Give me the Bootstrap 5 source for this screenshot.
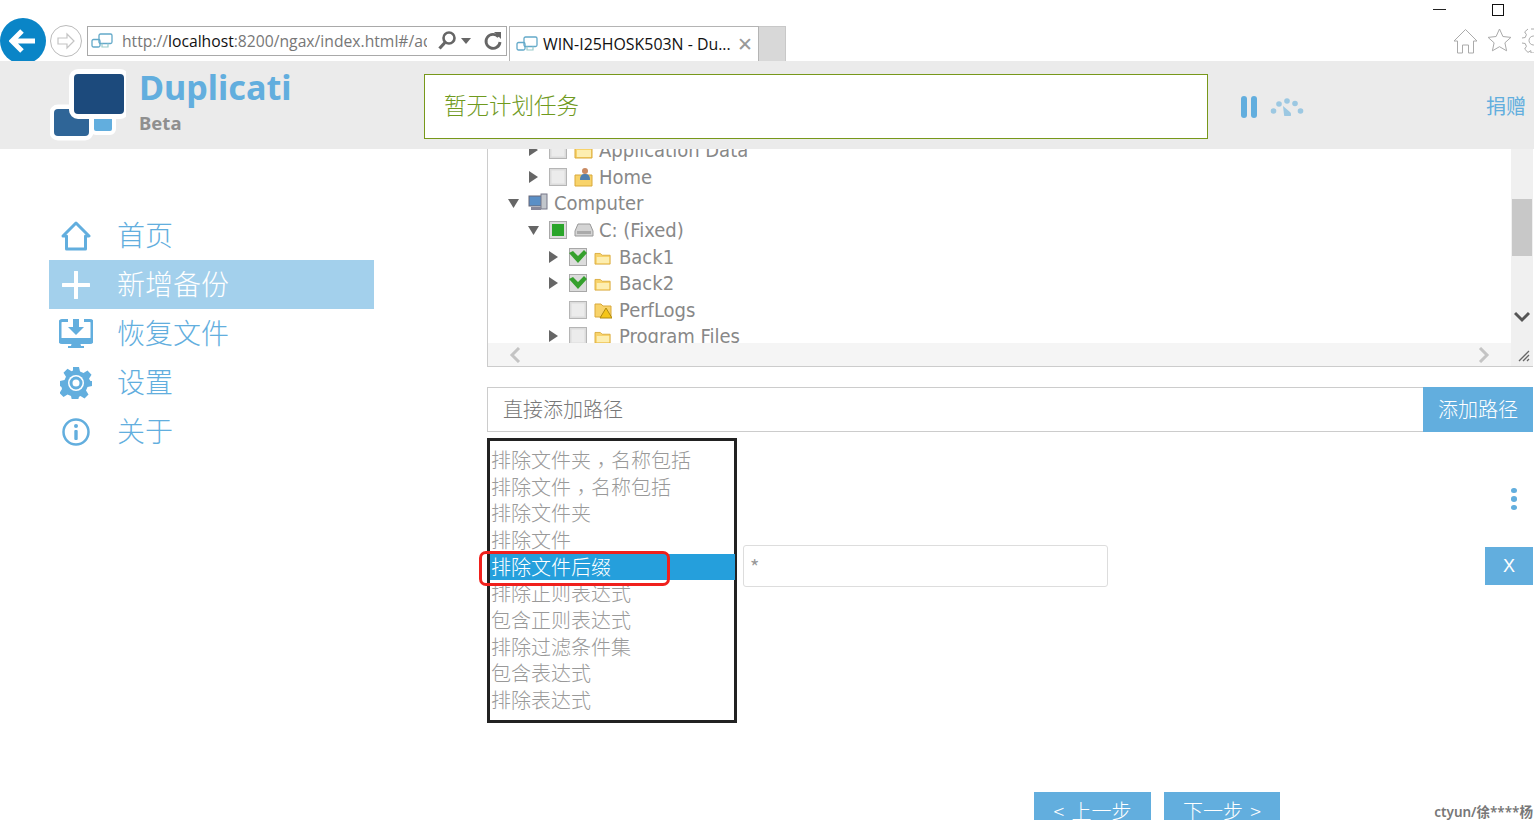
<!DOCTYPE html>
<html lang="zh">
<head>
<meta charset="utf-8">
<title>Duplicati</title>
<link href="https://cdn.jsdelivr.net/npm/bootstrap@5.3.0/dist/css/bootstrap.min.css" rel="stylesheet">
<style>
html,body{height:820px;overflow:hidden;background:#fff}
body{font-family:"Noto Sans CJK SC","Noto Sans",sans-serif;color:#999;width:1534px}
svg{display:block;flex:none}
.ie-bar{height:61px;overflow:hidden;background:#fff}
.win-ctl{height:18px;padding-right:30px;gap:46px}
.win-min{width:13px;height:1px;background:#222;margin-top:9px}
.win-max{width:12px;height:12px;border:1.5px solid #111;margin-top:4px}
.ie-nav{height:43px;align-items:flex-start}
.back-btn{width:46px;height:46px;border-radius:50%;background:#0a85c7;margin-left:0}
.fwd-btn{width:32px;height:32px;margin:7px 5px 0 4px;border:1px solid #bbb;border-radius:50%}
.addr{width:420px;height:30px;margin-top:8px;border:1px solid #a9a9a9;padding:0 0 0 3px}
.addr-url{font:15.7px "Open Sans",sans-serif;color:#777;width:305px;flex:none;overflow:hidden;white-space:nowrap;margin:0 2px 0 9px}
.addr-url b{font-weight:400;color:#111}
.tool-r{margin-left:12px}
.ie-tab{width:250px;height:35px;margin:8px 0 0 2px;border:1px solid #b4b4b4;border-bottom:0;padding:0 6px}
.ie-tab-text{font:15.9px "Open Sans",sans-serif;color:#111;margin-left:5px;white-space:nowrap;width:190px}
.ie-x{font:19px "Liberation Sans",sans-serif;color:#999;line-height:1;margin-left:6px}
.ie-new{width:27px;height:35px;margin-top:8px;background:#d8d8d8;border:1px solid #c8c8c8;border-bottom:0;border-left:0}
.ie-tools{gap:9px;margin:10px -12px 0 auto}
.app-head{height:88px;background:#ebebeb;padding-left:50px}
.brand-text{margin-left:13px;width:277px;padding-top:4px}
.brand-name{font:700 34.2px/44px "Noto Sans",sans-serif;color:#62aede}
.brand-sub{font:700 18.5px/26px "Noto Sans",sans-serif;color:#8f8f8f;margin-top:1px}
.status-box{width:784px;height:65px;margin:13px 0 0 8px;background:#fff;border:1px solid #77981a;padding:0 0 4px 19px;font-size:22.5px;font-weight:300;color:#6f9a1e}
.pause-wrap{margin:35px 0 0 33px;gap:13px}
.donate{margin:30px 8px 0 auto;font-size:20px;color:#62aede}
.page-main{display:flex}
.side-col{width:487px;padding:62px 0 0 49px;flex:none}
.side-link{width:325px;height:49px;color:#62aede;font-size:28px;font-weight:300;text-decoration:none}
.side-link.is-on{background:#a3d0ec;color:#fff}
.side-txt{margin-top:-4px}
.side-ico{width:53px;margin-right:15px;flex:none;display:flex;justify-content:center}
.body-col{flex:1;min-width:0;padding-right:1px}
.tree-panel{height:218px;border:1px solid #ccc;border-top:0;border-right:0;display:flex}
.tree-main{flex:1;display:flex;flex-direction:column;min-width:0}
.tree-view{height:195px;overflow:hidden;padding:0 0 0 20px}
.tree-list{margin-top:-12px}
.tree-row{height:26.6px;display:flex;align-items:center;font:20px "DejaVu Sans Condensed","DejaVu Sans",sans-serif;font-stretch:condensed;color:#888;white-space:nowrap}
.lv1{padding-left:20px}
.lv2{padding-left:40px}
.tw{width:11px;height:12px;margin-right:10px;flex:none}
.tw-top{margin-right:9px}
.tree-gap{width:21px;flex:none}
.chk{width:18px;height:18px;margin-right:7px;flex:none}
.fi{margin-right:5px}
.fi-top{margin-right:6px}
.fi-sub{margin-right:7px}
.h-track{height:23px;background:#f5f5f5;padding:0 21px 0 21px}
.v-track{width:22px;background:#f0f0f0;flex:none;padding-top:50px}
.v-thumb{height:57px;background:#c8c8c8;margin:0 1px}
.v-down{margin:55px auto 0}
.v-grip{margin:27px 0 0 7px}
.path-group{margin-top:20px;height:45px}
.path-input.form-control{height:45px;border:1px solid #ccc;border-radius:0;border-right:0;padding:0 15px 2px;font-size:20px;font-weight:300;box-shadow:none}
.path-input::placeholder{color:#777}
.path-btn{width:110px;flex:none;background:#62aede;color:#fff;border:0;border-radius:0;font-size:20px;font-weight:300;padding:0 0 2px}
.filter-row{margin-top:6px}
.type-list{width:250px;height:285px;border:3px solid #222;padding-top:6.2px;position:relative;flex:none;font-size:20px;font-weight:300;color:#999}
.type-opt{height:26.65px;line-height:26.65px;margin-right:-1px;padding-left:1px;white-space:nowrap}
.type-opt.is-sel{background:#259fdc;color:#fff}
.cm-tc{font-family:"Noto Sans CJK TC",sans-serif;vertical-align:-5px;line-height:1}
.red-mark{position:absolute;left:-11px;top:110px;width:191px;height:35px;border:3px solid #f0201c;border-radius:7px;pointer-events:none}
.filter-side{flex:1;padding-left:6px;min-width:0}
.dots-line{height:22px;margin-top:50px;padding-right:16px;justify-content:flex-end}
.dots{width:6px;display:flex;flex-direction:column;gap:3px}
.dots span{height:6px;border-radius:50%;background:#62aede}
.value-line{margin-top:35px}
.value-box{width:365px;height:42px;border:1px solid #ddd;border-radius:3px;padding:6px 6px 0;font-size:20px;color:#999}
.x-btn{margin-left:auto;width:48px;height:38px;background:#62aede;color:#fff;border:0;border-radius:0;font-size:18px;padding:0;font-family:"Liberation Sans",sans-serif}
.wiz-row{margin-top:69px;padding-left:547px;gap:13px}
.wiz-btn{height:45px;background:#62aede;color:#fff;border:0;border-radius:0;font-size:20px;font-weight:300;padding:0 0 8px;display:block;word-spacing:3px}
.wiz-a{width:117px}
.wiz-b{width:116px}
.credit{position:absolute;right:1px;bottom:-1px;font:600 13.5px "Noto Sans","Noto Sans CJK SC",sans-serif;color:#777}
</style>
</head>
<body class="position-relative">

<svg width="0" height="0" class="position-absolute">
  <defs>
    <symbol id="ico-screens" viewBox="0 0 22 16"><rect x="8" y="1" width="13" height="9.5" rx="1.5" fill="#fff" stroke="#63a9c9" stroke-width="1.3"/><rect x="1" y="6.5" width="8" height="7.5" rx="1.5" fill="none" stroke="#63a9c9" stroke-width="1.3"/><path d="M11 10.5v3.5h6v-3.5" fill="none" stroke="#9cc" stroke-width="1.2"/></symbol>
    <symbol id="ico-folder" viewBox="0 0 20 18"><path d="M1 5h6l2 2h9v10H1z" fill="#f8d36a" stroke="#d9a93a"/><path d="M3 9h14v7H3z" fill="#fdeeb0"/></symbol>
    <symbol id="ico-box" viewBox="0 0 18 18"><rect x=".5" y=".5" width="17" height="17" fill="#dcdcdc" stroke="#b5b5b5"/><rect x="2.5" y="2.5" width="13" height="13" fill="#ececec"/></symbol>
    <symbol id="ico-tick" viewBox="0 0 18 18"><rect x=".5" y=".5" width="17" height="17" fill="#dcdcdc" stroke="#a8a8a8"/><path d="M0 5l4-2 5 5 6-6 3 3-9 10z" fill="#35a02d"/></symbol>
    <symbol id="ico-right" viewBox="0 0 11 12"><path d="M1 0l9 6-9 6z" fill="#666"/></symbol>
    <symbol id="ico-down" viewBox="0 0 11 12"><path d="M0 2h11L5.500 11z" fill="#666"/></symbol>
  </defs>
</svg>

<header class="ie-bar">
  <div class="win-ctl d-flex justify-content-end">
    <div class="win-min"></div>
    <div class="win-max"></div>
  </div>
  <div class="ie-nav d-flex">
    <div class="back-btn d-flex align-items-center justify-content-center flex-none">
      <svg width="28" height="26" viewBox="0 0 28 26"><path d="M13 3L3 13l10 10M4 13h22" fill="none" stroke="#fff" stroke-width="5"/></svg>
    </div>
    <div class="fwd-btn d-flex align-items-center justify-content-center">
      <svg width="20" height="18" viewBox="0 0 20 18"><path d="M11 2l7 7-7 7v-4H2V6h9z" fill="none" stroke="#c4c4c4" stroke-width="1.2"/></svg>
    </div>
    <div class="addr d-flex align-items-center">
      <svg width="22" height="16"><use href="#ico-screens"/></svg>
      <div class="addr-url">http://<b>localhost</b>:8200/ngax/index.html#/add</div>
      <svg class="ms-2" width="20" height="22" viewBox="0 0 20 22"><circle cx="12" cy="8" r="5.500" fill="none" stroke="#666" stroke-width="2.600"/><path d="M8 12.500L2.500 18.500" stroke="#666" stroke-width="3.200"/></svg>
      <svg class="ms-1" width="10" height="6" viewBox="0 0 10 6"><path d="M0 0h10L5 6z" fill="#666"/></svg>
      <svg class="tool-r" width="20" height="22" viewBox="0 0 20 22"><path d="M15.500 7A7 7 0 1 0 17 12" fill="none" stroke="#666" stroke-width="2.800"/><path d="M11 2l7 0 0 7z" fill="#666"/></svg>
    </div>
    <div class="ie-tab d-flex align-items-center">
      <svg width="22" height="16"><use href="#ico-screens"/></svg>
      <div class="ie-tab-text">WIN-I25HOSK503N - Du...</div>
      <span class="ie-x">✕</span>
    </div>
    <div class="ie-new"></div>
    <div class="ie-tools d-flex">
      <svg width="25" height="26" viewBox="0 0 25 26"><path d="M1 13L12.500 1.500 24 13h-3.500v12h-5v-8h-6v8h-5V13z" fill="none" stroke="#aaa"/></svg>
      <svg width="25" height="25" viewBox="0 0 25 25"><path d="M12.500 1l3.400 7.500 8 .9-6 5.400 1.700 8-7.100-4.100-7.100 4.100 1.700-8-6-5.400 8-.9z" fill="none" stroke="#aaa"/></svg>
      <svg width="25" height="25" viewBox="0 0 25 25"><circle cx="12.500" cy="12.500" r="4.500" fill="none" stroke="#aaa"/><path d="M10 1h5l.7 3.200 2.800 1.200 2.800-1.700 3.200 3.300-1.800 2.800 1.200 2.700H27M1 10l3.200-.5 1.200-2.800-1.700-2.800L7 1M1 15l3.200.5 1.200 2.800-1.700 2.800L7 24.400l2.800-1.800 .2 2.400h5" fill="none" stroke="#aaa"/></svg>
    </div>
  </div>
</header>

<div class="app-head d-flex align-items-start">
  <svg class="mt-1" width="76" height="76" viewBox="0 0 76 76">
    <rect x="44" y="50" width="18" height="16" rx="2" fill="#62aede" stroke="#fff" stroke-width="8" paint-order="stroke"/>
    <rect x="4" y="44" width="35" height="27" rx="4" fill="#2f6597" stroke="#fff" stroke-width="9" paint-order="stroke"/>
    <rect x="24" y="9" width="50" height="40" rx="4" fill="#1c4a7c" stroke="#fff" stroke-width="10" paint-order="stroke"/>
  </svg>
  <div class="brand-text">
    <div class="brand-name">Duplicati</div>
    <div class="brand-sub">Beta</div>
  </div>
  <div class="status-box d-flex align-items-center">暂无计划任务</div>
  <div class="pause-wrap d-flex align-items-center">
    <svg width="16" height="22" viewBox="0 0 16 22"><rect width="6" height="22" rx="3" fill="#62aede"/><rect x="10" width="6" height="22" rx="3" fill="#62aede"/></svg>
    <svg width="34" height="18" viewBox="0 0 34 18" fill="#9cc8e2"><circle cx="3.500" cy="13" r="2.800"/><circle cx="9" cy="6" r="2.800"/><circle cx="17" cy="3" r="2.800"/><circle cx="25" cy="5.500" r="2.800"/><circle cx="30.500" cy="13" r="2.800"/><path d="M13 8l7 6a3.500 3.500 0 1 1-6 2.500z"/></svg>
  </div>
  <div class="donate">捐赠</div>
</div>

<main class="page-main">
  <nav class="side-col">
    <a class="side-link d-flex align-items-center" href="#">
      <span class="side-ico"><svg width="30" height="30" viewBox="0 0 30 30"><path d="M2 15L15 2l13 13h-3.500v13h-19V15z" fill="none" stroke="#62aede" stroke-width="3" stroke-linejoin="round"/></svg></span><span class="side-txt">首页</span>
    </a>
    <a class="side-link is-on d-flex align-items-center" href="#">
      <span class="side-ico"><svg width="28" height="28" viewBox="0 0 28 28"><path d="M14 1v26M1 14h26" stroke="#fff" stroke-width="4" stroke-linecap="round"/></svg></span><span class="side-txt">新增备份</span>
    </a>
    <a class="side-link d-flex align-items-center" href="#">
      <span class="side-ico"><svg width="34" height="30" viewBox="0 0 34 30"><path d="M9 1.500H3A2 2 0 0 0 1 3.500v18a2 2 0 0 0 2 2h28a2 2 0 0 0 2-2v-18a2 2 0 0 0-2-2h-6" fill="none" stroke="#62aede" stroke-width="3"/><path d="M1 19h32v4H1zM13 23h8l1 4h3v2H9v-2h3z" fill="#62aede"/><path d="M14 0h6v8h5l-8 8-8-8h5z" fill="#62aede"/></svg></span><span class="side-txt">恢复文件</span>
    </a>
    <a class="side-link d-flex align-items-center" href="#">
      <span class="side-ico"><svg width="32" height="32" viewBox="0 0 32 32"><path d="M13 0h6l1 4.500 3.500 1.500 4-2.500 4 4.200-2.500 4L30.500 14l1.500 0v5l-4.500 1-1.500 3.500 2.500 4-4 4-4-2.500-1.500.7-1 3.800h-6l-1-4.500-3.500-1.500-4 2.500-4-4 2.500-4L1.500 20 0 19v-5l4.500-1L6 9.700l-2.500-4 4-4 4 2.500 1.500-.7z" fill="#62aede"/><circle cx="16" cy="16" r="8" fill="#fff"/><circle cx="16" cy="16" r="5" fill="none" stroke="#62aede" stroke-width="3"/></svg></span><span class="side-txt">设置</span>
    </a>
    <a class="side-link d-flex align-items-center" href="#">
      <span class="side-ico"><svg width="28" height="28" viewBox="0 0 28 28"><circle cx="14" cy="14" r="12.500" fill="none" stroke="#62aede" stroke-width="2.500"/><circle cx="14" cy="8" r="2" fill="#62aede"/><rect x="12.300" y="12" width="3.400" height="10" rx="1" fill="#62aede"/></svg></span><span class="side-txt">关于</span>
    </a>
  </nav>

  <section class="body-col">
    <div class="tree-panel">
      <div class="tree-main">
        <div class="tree-view">
          <div class="tree-list">
            <div class="tree-row lv1"><svg class="tw"><use href="#ico-right"/></svg><svg class="chk"><use href="#ico-box"/></svg><svg class="fi" width="20" height="18"><use href="#ico-folder"/></svg>Application Data</div>
            <div class="tree-row lv1"><svg class="tw"><use href="#ico-right"/></svg><svg class="chk"><use href="#ico-box"/></svg><svg class="fi" width="20" height="20" viewBox="0 0 20 20"><path d="M1 8h17v11H1z" fill="#f8d36a" stroke="#d9a93a"/><circle cx="11" cy="4" r="3" fill="#c98a62"/><path d="M6 13c0-5 2-6 5-6s5 1 5 6z" fill="#4f7fae"/></svg>Home</div>
            <div class="tree-row"><svg class="tw tw-top"><use href="#ico-down"/></svg><svg class="fi-top" width="20" height="20" viewBox="0 0 20 20"><rect x="1" y="3" width="13" height="10" fill="#5a8fc6" stroke="#667"/><rect x="13" y="1" width="6" height="15" fill="#c2c6cc" stroke="#778"/><rect x="3" y="14" width="10" height="3" fill="#889"/></svg>Computer</div>
            <div class="tree-row lv1"><svg class="tw"><use href="#ico-down"/></svg><svg class="chk" viewBox="0 0 18 18"><rect x=".5" y=".5" width="17" height="17" fill="#dcdcdc" stroke="#a8a8a8"/><rect x="3" y="3" width="12" height="12" fill="#2aa52a"/></svg><svg class="fi" width="20" height="14" viewBox="0 0 20 14"><path d="M4 1h12l3 7v5H1V8z" fill="#d4d4d4" stroke="#999"/><rect x="3" y="8" width="14" height="3" fill="#aaa"/></svg>C: (Fixed)</div>
            <div class="tree-row lv2"><svg class="tw"><use href="#ico-right"/></svg><svg class="chk"><use href="#ico-tick"/></svg><svg class="fi-sub" width="18" height="16"><use href="#ico-folder"/></svg>Back1</div>
            <div class="tree-row lv2"><svg class="tw"><use href="#ico-right"/></svg><svg class="chk"><use href="#ico-tick"/></svg><svg class="fi-sub" width="18" height="16"><use href="#ico-folder"/></svg>Back2</div>
            <div class="tree-row lv2"><span class="tree-gap"></span><svg class="chk"><use href="#ico-box"/></svg><svg class="fi-sub" width="18" height="18" viewBox="0 0 18 18"><path d="M1 3h6l2 2h8v11H1z" fill="#f8d36a" stroke="#d9a93a"/><path d="M12 7l6 10H6z" fill="#f5c518" stroke="#b08a10"/></svg>PerfLogs</div>
            <div class="tree-row lv2"><svg class="tw"><use href="#ico-right"/></svg><svg class="chk"><use href="#ico-box"/></svg><svg class="fi-sub" width="18" height="16"><use href="#ico-folder"/></svg>Program Files</div>
          </div>
        </div>
        <div class="h-track d-flex align-items-center justify-content-between">
          <svg width="12" height="16" viewBox="0 0 12 16"><path d="M10 1L3 8l7 7" fill="none" stroke="#c4c4c4" stroke-width="3"/></svg>
          <svg width="12" height="16" viewBox="0 0 12 16"><path d="M2 1l7 7-7 7" fill="none" stroke="#c4c4c4" stroke-width="3"/></svg>
        </div>
      </div>
      <div class="v-track">
        <div class="v-thumb"></div>
        <svg class="v-down" width="16" height="12" viewBox="0 0 16 12"><path d="M1 2l7 7 7-7" fill="none" stroke="#555" stroke-width="3"/></svg>
        <svg class="v-grip" width="12" height="12" viewBox="0 0 12 12"><path d="M1 11L11 1M5 11l6-6M9 11l2-2" stroke="#666" stroke-width="1.300"/></svg>
      </div>
    </div>

    <div class="path-group input-group">
      <input class="path-input form-control" type="text" placeholder="直接添加路径">
      <button class="path-btn btn" type="button">添加路径</button>
    </div>

    <div class="filter-row d-flex">
      <div class="type-list">
        <div class="type-opt">排除文件夹<span class="cm-tc" lang="zh-Hant">，</span>名称包括</div>
        <div class="type-opt">排除文件<span class="cm-tc" lang="zh-Hant">，</span>名称包括</div>
        <div class="type-opt">排除文件夹</div>
        <div class="type-opt">排除文件</div>
        <div class="type-opt is-sel">排除文件后缀</div>
        <div class="type-opt">排除正则表达式</div>
        <div class="type-opt">包含正则表达式</div>
        <div class="type-opt">排除过滤条件集</div>
        <div class="type-opt">包含表达式</div>
        <div class="type-opt">排除表达式</div>
        <div class="red-mark"></div>
      </div>
      <div class="filter-side">
        <div class="dots-line d-flex"><div class="dots"><span></span><span></span><span></span></div></div>
        <div class="value-line d-flex align-items-center">
          <div class="value-box">*</div>
          <button class="x-btn btn" type="button">X</button>
        </div>
      </div>
    </div>

    <div class="wiz-row d-flex">
      <button class="wiz-btn wiz-a btn" type="button">&lt; 上一步</button>
      <button class="wiz-btn wiz-b btn" type="button">下一步 &gt;</button>
    </div>
  </section>
</main>

<div class="credit">ctyun/徐****杨</div>

<script src="https://cdn.jsdelivr.net/npm/bootstrap@5.3.0/dist/js/bootstrap.bundle.min.js"></script>
</body>
</html>
